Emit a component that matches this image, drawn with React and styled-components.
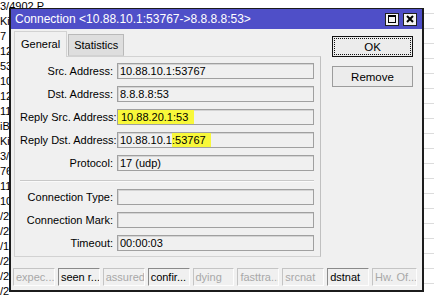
import styled, { createGlobalStyle } from 'styled-components'

const Global = createGlobalStyle`
    html, body { margin: 0; padding: 0; background: #fff; }
    body { font-family: "Liberation Sans", Arial, sans-serif; font-size: 11px; color: #000; }
    #root { width: 434px; height: 295px; overflow: hidden; }
`

const Desktop = styled.div`
    position: relative;
    width: 434px;
    height: 295px;
    overflow: hidden;
    background: #fff;
`

const BgList = styled.div`
    margin-top: -1px;
    display: flex;
    flex-direction: column;
`

const BgRow = styled.div`
    display: grid;
    grid-template-columns: 67px 1fr;
    height: 15px;
    line-height: 15px;
`

const BgCell = styled.div`
    white-space: nowrap;
    overflow: hidden;
`

const BgLine = styled.div`
    border-bottom: 1px solid #dcdcdc;
`

const Window = styled.div`
    position: absolute;
    left: 9px;
    top: 8px;
    width: 415px;
    box-sizing: border-box;
    border: 2px solid #1c1c1c;
    border-top-width: 1px;
    background: #f0f0f0;
`

const TitleBar = styled.div`
    height: 20px;
    background: #4f4fc8;
    display: flex;
    align-items: center;
    justify-content: space-between;
    padding: 0 5px 0 4px;
`

const Title = styled.div`
    color: #fff;
    font-size: 12px;
    white-space: nowrap;
`

const TitleButtons = styled.div`
    display: flex;
    gap: 4px;
`

const TitleBtn = styled.div`
    width: 12px;
    height: 11px;
    border: 1px solid #202020;
    background: #f4f4f4;
    display: flex;
    align-items: center;
    justify-content: center;
`

const Body = styled.div`
    padding: 2px 9px 4px 3px;
`

const Main = styled.div`
    display: flex;
    gap: 11px;
`

const Left = styled.div`
    width: 307px;
    display: flex;
    flex-direction: column;
`

const Tabs = styled.div`
    display: flex;
    align-items: flex-end;
    height: 25px;
    position: relative;
    z-index: 1;
`

const Tab = styled.div`
    box-sizing: border-box;
    height: ${p => (p.$active ? '26px' : '22px')};
    margin-bottom: ${p => (p.$active ? '-1px' : '0')};
    padding: ${p => (p.$active ? '6px 6px 0' : '4px 5px 0')};
    background: ${p => (p.$active ? '#f0f0f0' : '#dedede')};
    border: 1px solid ${p => (p.$active ? '#d2d2d2' : '#b9b9b9')};
    border-bottom: ${p => (p.$active ? 'none' : '1px solid #d2d2d2')};
    margin-left: ${p => (p.$active ? '0' : '1px')};
    font-size: 11px;
    white-space: nowrap;
`

const Panel = styled.div`
    border: 1px solid #d2d2d2;
    border-right-color: #c0c0c0;
    padding: 6px 6px 5px 5px;
    display: grid;
    grid-template-columns: 93px 197px;
    column-gap: 4px;
    row-gap: 7px;
    align-items: center;
`

const Label = styled.div`
    text-align: right;
    line-height: 16px;
    white-space: nowrap;
`

const Value = styled.div`
    box-sizing: border-box;
    height: 16px;
    line-height: 14px;
    border: 1px solid #a0a0a0;
    box-shadow: inset 1px 1px 0 #d4d4d4;
    background: #f0f0f0;
    padding-left: 2px;
    white-space: nowrap;
    overflow: hidden;
`

const Mark = styled.span`
    background: #f8f83a;
    display: inline-block;
    height: 14px;
    padding: ${p => p.$pad};
    margin-left: ${p => p.$ml};
`

const Separator = styled.div`
    grid-column: 1 / span 2;
    height: 2px;
    margin-top: 2px;
    border-top: 1px solid #c8c8c8;
    border-bottom: 1px solid #fafafa;
    box-sizing: border-box;
`

const Side = styled.div`
    width: 81px;
    padding-top: 5px;
    display: flex;
    flex-direction: column;
    gap: 9px;
`

const Button = styled.div`
    position: relative;
    box-sizing: border-box;
    height: 21px;
    border: 1px solid ${p => (p.$default ? '#111' : '#9c9c9c')};
    background: #ececec;
    display: flex;
    align-items: center;
    justify-content: center;
    font-size: 11.5px;

    &::after {
        content: '';
        display: ${p => (p.$default ? 'block' : 'none')};
        position: absolute;
        inset: 1px;
        border: 1px dotted #111;
    }
`

const StatusBar = styled.div`
    margin: 11px -4px 0 -1px;
    display: grid;
    grid-template-columns: repeat(8, 1fr) 45px;
    gap: 3px;
`

const StatusCell = styled.div`
    box-sizing: border-box;
    height: 18px;
    line-height: 17px;
    padding-left: 2px;
    border-top: 1px solid ${p => (p.$on ? '#8a8a8a' : '#c4c4c4')};
    border-left: 1px solid ${p => (p.$on ? '#8a8a8a' : '#c4c4c4')};
    border-right: 1px solid #fdfdfd;
    border-bottom: 1px solid #fdfdfd;
    color: ${p => (p.$on ? '#000' : '#a8a8a8')};
    white-space: nowrap;
    overflow: hidden;
`

const bgTexts = ['3/4902 P', 'Ki', '7 K', '12', '53', '10', '12', '11', 'iB', 'Ki', '3/', '76', '11', '10', '/2', '/2', '/1', '/2', '/2', '/2', '/2']

const fields = [
    { label: 'Src. Address:', value: '10.88.10.1:53767' },
    { label: 'Dst. Address:', value: '8.8.8.8:53' },
    { label: 'Reply Src. Address:', value: <Mark $pad="0 6px 0 3px" $ml="-2px">10.88.20.1:53</Mark> },
    { label: 'Reply Dst. Address:', value: <>10.88.10.1<Mark $pad="0 5px 0 0" $ml="0">:53767</Mark></> },
    { label: 'Protocol:', value: '17 (udp)' },
]

const fields2 = [
    { label: 'Connection Type:', value: '' },
    { label: 'Connection Mark:', value: '' },
    { label: 'Timeout:', value: '00:00:03' },
]

const status = [
    ['expec...', false],
    ['seen r...', true],
    ['assured', false],
    ['confir...', true],
    ['dying', false],
    ['fasttra...', false],
    ['srcnat', false],
    ['dstnat', true],
    ['Hw. Of...', false],
]

const Field = ({ label, value }) => <>
    <Label>{label}</Label>
    <Value>{value}</Value>
</>

const App = () => <Desktop>
    <Global />
    <BgList>
        {bgTexts.map((t, i) => <BgRow key={i}>
            <BgCell>{t}</BgCell>
            <BgLine />
        </BgRow>)}
    </BgList>
    <Window>
        <TitleBar>
            <Title>Connection &lt;10.88.10.1:53767-&gt;8.8.8.8:53&gt;</Title>
            <TitleButtons>
                <TitleBtn>
                    <svg width="8" height="8" viewBox="0 0 8 8">
                        <rect x="0.5" y="0.5" width="7" height="7" fill="none" stroke="#000" strokeWidth="1" />
                        <line x1="0" y1="1" x2="8" y2="1" stroke="#000" strokeWidth="2" />
                    </svg>
                </TitleBtn>
                <TitleBtn>
                    <svg width="8" height="8" viewBox="0 0 8 8">
                        <path d="M1 1 L7 7 M7 1 L1 7" stroke="#000" strokeWidth="2" />
                    </svg>
                </TitleBtn>
            </TitleButtons>
        </TitleBar>
        <Body>
            <Main>
                <Left>
                    <Tabs>
                        <Tab $active>General</Tab>
                        <Tab>Statistics</Tab>
                    </Tabs>
                    <Panel>
                        {fields.map(f => <Field key={f.label} {...f} />)}
                        <Separator />
                        {fields2.map(f => <Field key={f.label} {...f} />)}
                    </Panel>
                </Left>
                <Side>
                    <Button $default>OK</Button>
                    <Button>Remove</Button>
                </Side>
            </Main>
            <StatusBar>
                {status.map(([t, on]) => <StatusCell key={t} $on={on}>{t}</StatusCell>)}
            </StatusBar>
        </Body>
    </Window>
</Desktop>

export default App
